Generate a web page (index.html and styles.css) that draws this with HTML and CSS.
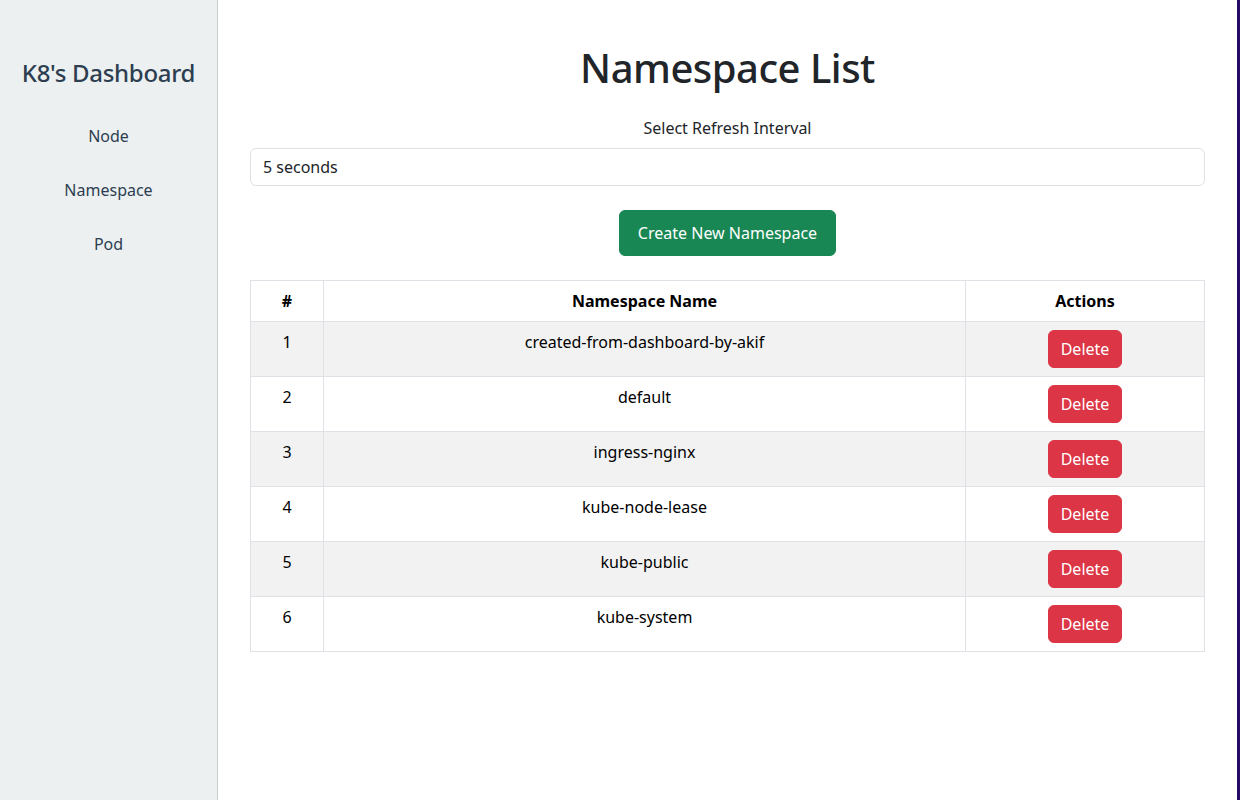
FILE: index.html
```html
<!DOCTYPE html>
<html lang="en">
<head>
<meta charset="utf-8">
<title>K8's Dashboard</title>
<link rel="stylesheet" href="styles.css">
</head>
<body>
<div class="app">
  <aside class="sidebar">
    <h2 class="brand">K8's Dashboard</h2>
    <nav class="nav">
      <a href="#">Node</a>
      <a href="#">Namespace</a>
      <a href="#">Pod</a>
    </nav>
  </aside>
  <main class="main">
    <h1 class="title">Namespace List</h1>
    <label class="label" for="interval">Select Refresh Interval</label>
    <select id="interval" class="select">
      <option>5 seconds</option>
      <option>10 seconds</option>
      <option>30 seconds</option>
    </select>
    <div class="create-wrap">
      <button class="btn btn-create">Create New Namespace</button>
    </div>
    <table class="table">
      <thead>
        <tr><th class="col-num">#</th><th class="col-name">Namespace Name</th><th class="col-act">Actions</th></tr>
      </thead>
      <tbody>
        <tr><td>1</td><td>created-from-dashboard-by-akif</td><td><button class="btn btn-delete">Delete</button></td></tr>
        <tr><td>2</td><td>default</td><td><button class="btn btn-delete">Delete</button></td></tr>
        <tr><td>3</td><td>ingress-nginx</td><td><button class="btn btn-delete">Delete</button></td></tr>
        <tr><td>4</td><td>kube-node-lease</td><td><button class="btn btn-delete">Delete</button></td></tr>
        <tr><td>5</td><td>kube-public</td><td><button class="btn btn-delete">Delete</button></td></tr>
        <tr><td>6</td><td>kube-system</td><td><button class="btn btn-delete">Delete</button></td></tr>
      </tbody>
    </table>
  </main>
  <div class="edge"></div>
</div>
</body>
</html>
```

FILE: styles.css
```css
* { box-sizing: border-box; }
html, body { margin: 0; padding: 0; height: 100%; }
body {
  font-family: "Noto Sans", "Open Sans", sans-serif;
  font-size: 16px;
  line-height: 1.5;
  color: #212529;
  background: #fff;
}
.app {
  display: flex;
  min-height: 100vh;
}
.sidebar {
  width: 218px;
  flex: 0 0 218px;
  background: #ecf0f1;
  border-right: 1px solid #c9cdce;
  padding-top: 56px;
  text-align: center;
  color: #2c3e50;
}
.brand {
  margin: 0;
  font-size: 24px;
  font-weight: 500;
  line-height: 34px;
  letter-spacing: -0.3px;
  color: #2c3e50;
}
.nav {
  display: flex;
  flex-direction: column;
  align-items: center;
  gap: 30px;
  margin-top: 34px;
}
.nav a {
  color: #2c3e50;
  text-decoration: none;
  font-size: 16px;
  line-height: 24px;
}
.main {
  flex: 1;
  padding: 44px 32px 0;
  display: flex;
  flex-direction: column;
}
.edge {
  width: 3px;
  flex: 0 0 3px;
  background: #250b63;
}
.title {
  margin: 0;
  text-align: center;
  font-size: 40px;
  font-weight: 500;
  line-height: 48px;
  letter-spacing: -0.5px;
  color: #212529;
}
.label {
  display: block;
  text-align: center;
  margin-top: 24px;
  margin-bottom: 8px;
  line-height: 24px;
}
.select {
  display: block;
  width: 100%;
  height: 38px;
  padding: 6px 12px;
  font: inherit;
  color: #212529;
  background: #fff;
  border: 1px solid #dee2e6;
  border-radius: 6px;
  appearance: none;
  -webkit-appearance: none;
}
.create-wrap {
  display: flex;
  justify-content: center;
  margin-top: 24px;
  margin-bottom: 24px;
}
.btn {
  font: inherit;
  line-height: 24px;
  border: 1px solid transparent;
  border-radius: 6px;
  color: #fff;
  cursor: pointer;
}
.btn-create {
  background: #198754;
  border-color: #198754;
  padding: 10px 18px;
}
.btn-delete {
  background: #dc3545;
  border-color: #dc3545;
  padding: 6px 12px;
}
.table {
  width: 100%;
  border-collapse: collapse;
  text-align: center;
  color: #000;
}
.table th, .table td {
  border: 1px solid #dee2e6;
  padding: 8px;
  vertical-align: top;
  line-height: 24px;
}
.table th { font-weight: 700; }
.col-num { width: 73px; }
.col-act { width: 239px; }
.table tbody tr:nth-child(odd) td { background: #f2f2f2; }
```
